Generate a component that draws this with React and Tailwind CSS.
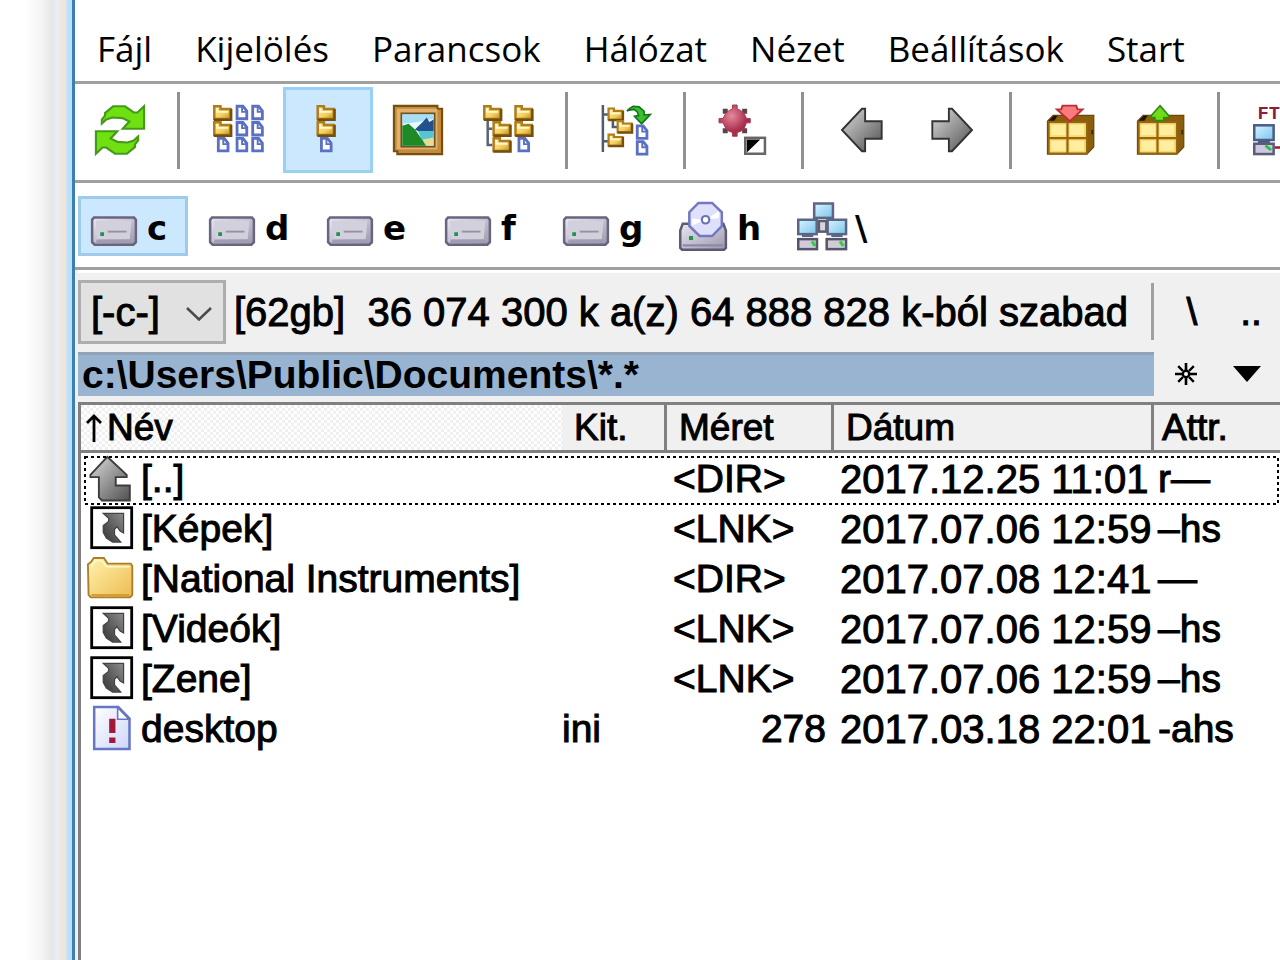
import { useState } from 'react'
import clsx from 'clsx'

const MENU = ['Fájl', 'Kijelölés', 'Parancsok', 'Hálózat', 'Nézet', 'Beállítások', 'Start']

const DRIVES = [
  { letter: 'c', type: 'disk' },
  { letter: 'd', type: 'disk' },
  { letter: 'e', type: 'disk' },
  { letter: 'f', type: 'disk' },
  { letter: 'g', type: 'disk' },
  { letter: 'h', type: 'cd' },
  { letter: '\\', type: 'network' }
]

const FILES = [
  { name: '[..]', icon: 'up', ext: '', size: '<DIR>', date: '2017.12.25 11:01', attr: 'r—' },
  { name: '[Képek]', icon: 'link', ext: '', size: '<LNK>', date: '2017.07.06 12:59', attr: '–hs' },
  { name: '[National Instruments]', icon: 'folder', ext: '', size: '<DIR>', date: '2017.07.08 12:41', attr: '—' },
  { name: '[Videók]', icon: 'link', ext: '', size: '<LNK>', date: '2017.07.06 12:59', attr: '–hs' },
  { name: '[Zene]', icon: 'link', ext: '', size: '<LNK>', date: '2017.07.06 12:59', attr: '–hs' },
  { name: 'desktop', icon: 'ini', ext: 'ini', size: '278', date: '2017.03.18 22:01', attr: '-ahs' }
]

// All icons are drawn on a 16x16 grid
function Icon({ children }) {
  return (
    <svg viewBox="0 0 16 16" className="w-[50px] h-[50px] shrink-0 overflow-visible" aria-hidden="true">
      {children}
    </svg>
  )
}

function Gradients() {
  return (
    <svg className="absolute w-0 h-0" aria-hidden="true">
      <defs>
        <linearGradient id="gold" x1="0" y1="0" x2="1" y2="1">
          <stop offset="0" stopColor="#fff0a0" />
          <stop offset="0.6" stopColor="#f2cf5c" />
          <stop offset="1" stopColor="#c08a1c" />
        </linearGradient>
        <linearGradient id="folder" x1="0" y1="0" x2="1" y2="1">
          <stop offset="0" stopColor="#fff3b0" />
          <stop offset="1" stopColor="#eebb4e" />
        </linearGradient>
        <linearGradient id="steel" x1="0" y1="0" x2="1" y2="1">
          <stop offset="0" stopColor="#ebe8f3" />
          <stop offset="1" stopColor="#9b97ad" />
        </linearGradient>
        <linearGradient id="gray" x1="0" y1="0" x2="1" y2="1">
          <stop offset="0" stopColor="#dcdcdc" />
          <stop offset="1" stopColor="#505050" />
        </linearGradient>
        <linearGradient id="darkgray" x1="0" y1="1" x2="1" y2="0">
          <stop offset="0" stopColor="#333" />
          <stop offset="1" stopColor="#8c8c8c" />
        </linearGradient>
        <linearGradient id="screen" x1="0" y1="0" x2="1" y2="1">
          <stop offset="0" stopColor="#d8f4ff" />
          <stop offset="1" stopColor="#7cc4ee" />
        </linearGradient>
        <linearGradient id="paper" x1="0" y1="0" x2="1" y2="1">
          <stop offset="0" stopColor="#ffffff" />
          <stop offset="1" stopColor="#cdd6f6" />
        </linearGradient>
        <radialGradient id="ruby" cx="0.4" cy="0.35">
          <stop offset="0" stopColor="#e58a9c" />
          <stop offset="1" stopColor="#a82c4c" />
        </radialGradient>
        <pattern id="dither" width="6" height="6" patternUnits="userSpaceOnUse">
          <path d="M0 0h3v3h-3zM3 3h3v3h-3z" fill="#f0f0f0" />
        </pattern>
      </defs>
    </svg>
  )
}

function MiniFolder({ x, y }) {
  return (
    <g transform={`translate(${x} ${y})`}>
      <path d="M0.4 0.4H2.4V1.3H5.6V4.5H0.4Z" fill="url(#gold)" stroke="#b07c1c" strokeWidth="0.8" />
      <path d="M0.3 4.7H5.8V1.3" fill="none" stroke="#74500f" strokeWidth="0.8" />
      <path d="M1.3 1V2.2H4.8" fill="none" stroke="#fff8d0" strokeWidth="0.6" />
    </g>
  )
}

function MiniDoc({ x, y }) {
  return (
    <g transform={`translate(${x} ${y})`}>
      <path d="M0.4 0.4H2.3L3.5 1.9V4.4H0.4Z" fill="#fff" stroke="#5b70c2" strokeWidth="0.9" />
      <path d="M2 0.5V2.2H3.5" fill="none" stroke="#5b70c2" strokeWidth="0.6" />
    </g>
  )
}

function RefreshIcon() {
  const arrow = 'M2.2 5.9V4.7L3.2 3.4V2.6L5.8 0.4H9.6L12.4 2.4H13.6L15.7 0.4V7.6H8.9L11 5.3L8.8 4.2L5.6 4L3.6 4.6Z'
  return (
    <Icon>
      <path d={arrow} fill="#6fe010" stroke="#459a1c" strokeWidth="0.7" />
      <path d={arrow} transform="rotate(180 8 8)" fill="#6fe010" stroke="#459a1c" strokeWidth="0.7" />
    </Icon>
  )
}

function FullViewIcon() {
  return (
    <Icon>
      <MiniFolder x={0} y={0} />
      <MiniFolder x={0} y={5.1} />
      <MiniDoc x={1.3} y={10.3} />
      {[0, 5.2, 10.3].map(y => (
        <g key={y}>
          <MiniDoc x={7.3} y={y} />
          <MiniDoc x={12.3} y={y} />
        </g>
      ))}
    </Icon>
  )
}

function BriefViewIcon() {
  return (
    <Icon>
      <MiniFolder x={4.3} y={0} />
      <MiniFolder x={4.3} y={5.1} />
      <MiniDoc x={5.5} y={10.3} />
    </Icon>
  )
}

function ThumbnailIcon() {
  return (
    <Icon>
      <path d="M0.3 0.3H14.2V1.2H15.7V15.7H1.4V14.8H0.3Z" fill="#c48b3e" stroke="#76500f" strokeWidth="0.7" />
      <rect x="1.2" y="1.2" width="13" height="13" fill="#dfb16a" />
      <rect x="2.7" y="2.7" width="10.6" height="10.6" fill="#e9fbff" stroke="#6b5326" strokeWidth="0.6" />
      <path d="M3 3H13V4.4L8 5.4L3 6Z" fill="#a8def4" />
      <path d="M7 7.8L9.5 5.4L10.8 4L11.6 5.4L13 4.6V8.3H8Z" fill="#24508c" />
      <path d="M8 8.3H13V13H10Z" fill="#57c4d4" />
      <path d="M9.5 11L13 10.4V13H10Z" fill="#e6dc96" />
      <path d="M3 6.6L5 6L7.2 8L10.6 13H3Z" fill="#1d8a26" />
    </Icon>
  )
}

function TreeIcon() {
  return (
    <Icon>
      <path d="M1.5 5V12.8H3M1.5 7.6H3" fill="none" stroke="#5b6474" strokeWidth="0.8" />
      <MiniFolder x={0} y={0} />
      <MiniFolder x={3} y={5.1} />
      <MiniFolder x={3} y={10.2} />
      <MiniFolder x={10} y={0} />
      <MiniFolder x={10} y={5.1} />
      <MiniDoc x={11.1} y={10.3} />
    </Icon>
  )
}

function BranchIcon() {
  return (
    <Icon>
      <path d="M0.6 0V15M0.6 3H2.4M0.6 11.6H2.4M3.8 4.5V7H6" fill="none" stroke="#4f5c70" strokeWidth="0.8" />
      <g transform="scale(0.86)">
        <MiniFolder x={2.4} y={0.9} />
        <MiniFolder x={5.8} y={5.6} />
        <MiniFolder x={2.4} y={10.6} />
      </g>
      <path d="M8.3 1.9L9.2 1.1L10.3 0.4L12.2 0.6L13.8 2V3.2L15.8 3L13 6L10.7 3.6L12 3.4L11.6 2.2L10.6 1.4L9 1.7Z" fill="#35c22a" stroke="#14701a" strokeWidth="0.5" />
      <MiniDoc x={11.2} y={6.3} />
      <MiniDoc x={11.2} y={11.3} />
    </Icon>
  )
}

function SelectionIcon() {
  return (
    <Icon>
      <path d="M1.2 1.2h1.6v1.6h-1.6zM7.4 1.2h1.6v1.6h-1.6zM1.2 7.4h1.6v1.6h-1.6zM7.4 7.4h1.6v1.6h-1.6z" fill="#5c4148" />
      <path d="M4.3 0H5.8V1.2L7 1.8L8 2.6L8.8 4.3H10V5.7H8.8L8 7.6L7 8.4L5.8 8.8V10H4.3V8.8L3.2 8.4L2.2 7.6L1.3 5.7H0V4.3H1.3L2.2 2.6L3.2 1.8L4.3 1.2Z" fill="url(#ruby)" stroke="#a43550" strokeWidth="0.3" />
      <rect x="8.4" y="10.5" width="6.3" height="5.1" fill="#fff" stroke="#666" strokeWidth="0.8" />
      <path d="M8.9 11H13.2L8.9 15.2Z" fill="#000" />
    </Icon>
  )
}

function ArrowIcon({ flip }) {
  return (
    <Icon>
      <path
        d={flip ? 'M14.4 8L8 14.8H7V10.8H1.7V5.2H7V1.2H8Z' : 'M1.6 8L8 1.2H9V5.2H14.3V10.8H9V14.8H8Z'}
        fill="url(#gray)"
        stroke="#333"
        strokeWidth="0.6"
      />
    </Icon>
  )
}

function PackIcon({ unpack }) {
  return (
    <Icon>
      <path d="M0.8 5.2L2.6 3.3H15.6V13.4L13.4 15.7H0.8Z" fill="#8a5e0c" stroke="#6d4806" strokeWidth="0.4" />
      <path d="M1.2 5L2.8 3.4H4L3 5Z" fill="#1c1204" />
      <rect x="1.2" y="5.5" width="12.2" height="10" fill="#f7d970" stroke="#94660f" strokeWidth="0.6" />
      <path d="M2 6.3h4.5v3.4h-4.5zM7.9 6.3h4.6v3.4h-4.6zM2 11.4h4.5v3.2h-4.5zM7.9 11.4h4.6v3.2h-4.6z" fill="#ffeea0" />
      <path d="M7.2 5.4V15.6M1.2 10.6H13.4" fill="none" stroke="#94660f" strokeWidth="0.7" />
      <path d="M15.1 8V9.4" stroke="#3d2904" strokeWidth="0.6" />
      {unpack ? (
        <path d="M8 0.2L10.8 3.4V4H9.2V5H6.4V4H5.2V3.4Z" fill="#6edc1a" stroke="#2f8a12" strokeWidth="0.5" />
      ) : (
        <path d="M5.6 0.2H10L10.4 1.4H12L8 5.2L3.8 1.4H5.2Z" fill="#f87c7c" stroke="#c22a38" strokeWidth="0.6" />
      )}
    </Icon>
  )
}

function FtpIcon() {
  return (
    <Icon>
      <text x="1.4" y="4.6" fontSize="6" fontWeight="700" fontFamily="Liberation Mono, monospace" fill="#8c1d3f">FT</text>
      <rect x="0.4" y="6.5" width="6.2" height="4.7" fill="url(#screen)" stroke="#4b5c86" strokeWidth="0.8" />
      <rect x="1.6" y="11.2" width="3.8" height="1" fill="#4b5c86" />
      <rect x="0.4" y="12.4" width="6.2" height="3.3" fill="#cfc6e2" stroke="#5a5c78" strokeWidth="0.8" />
      <path d="M4 13L5.8 14.4" stroke="#27c23a" strokeWidth="0.9" />
      <path d="M7 13.6H16" stroke="#8c1d3f" strokeWidth="0.8" />
    </Icon>
  )
}

function DiskIcon() {
  return (
    <Icon>
      <path d="M1.6 5.3H14.4L15 6V13.2L14.2 14H1.8L1 13.2V6Z" fill="url(#steel)" stroke="#69657e" strokeWidth="0.8" />
      <path d="M2.2 6.2H13.6L13 12.2H2.6Z" fill="#d3d0de" />
      <path d="M2.6 12.3H13L13.8 13.4H2Z" fill="#a19db2" />
      <path d="M6 9.8H12" stroke="#96929f" strokeWidth="0.6" />
      <rect x="3.6" y="10" width="1.2" height="1.2" fill="#23924c" />
    </Icon>
  )
}

function CdIcon() {
  return (
    <Icon>
      <path d="M1.2 7.3H14.2L15 9.4V15L14.4 15.6H1L0.4 15V9.4Z" fill="url(#steel)" stroke="#5d5a73" strokeWidth="0.8" />
      <path d="M1.2 14.2H14.2" stroke="#8e8aa0" strokeWidth="0.7" />
      <rect x="3.2" y="11.2" width="1.3" height="1.3" fill="#23924c" />
      <path d="M6.2 0.6H10.6L13.7 3.6V8L10.6 11.2H6.6L3.3 8V3.6Z" fill="#dfe0fb" stroke="#7377c4" strokeWidth="0.8" />
      <path d="M8.5 6L12.8 3.2V5.4ZM8.5 6L4.2 7.8V5.6Z" fill="#ffffff" />
      <circle cx="8.5" cy="6" r="1.2" fill="#fff" stroke="#6c70bb" strokeWidth="0.7" />
    </Icon>
  )
}

function NetworkIcon() {
  return (
    <Icon>
      <rect x="7" y="6.4" width="2.4" height="3.4" fill="#d7d4de" stroke="#5c5a6c" strokeWidth="0.8" />
      <rect x="5.5" y="0.8" width="6" height="4.6" fill="url(#screen)" stroke="#5b6782" strokeWidth="0.8" />
      <rect x="0.4" y="6" width="5.9" height="4.6" fill="url(#screen)" stroke="#5b6782" strokeWidth="0.8" />
      <rect x="9.8" y="6" width="5.9" height="4.6" fill="url(#screen)" stroke="#5b6782" strokeWidth="0.8" />
      <path d="M1.6 11.1H5.2M11 11.1H14.6" stroke="#5b6782" strokeWidth="0.8" />
      <rect x="0.4" y="12.2" width="6" height="3.2" fill="#cfcbd9" stroke="#56546a" strokeWidth="0.8" />
      <rect x="9.5" y="12.2" width="6.2" height="3.2" fill="#cfcbd9" stroke="#56546a" strokeWidth="0.8" />
      <path d="M4.8 12.9L5.8 14.4M13.8 12.9L14.8 14.4" stroke="#2bd23b" strokeWidth="1" />
    </Icon>
  )
}

function FileIcon({ type }) {
  if (type === 'up') {
    return (
      <Icon>
        <path d="M6.5 1.2L12.7 7V7.7H9.2V10.4H13.7V15.2H4.8L3.8 14.2V7.7H1.1V7Z" fill="url(#gray)" stroke="#3c3c3c" strokeWidth="0.6" />
      </Icon>
    )
  }
  if (type === 'link') {
    return (
      <Icon>
        <rect x="1.5" y="1.5" width="12.8" height="12.8" fill="#fff" stroke="#000" strokeWidth="0.9" />
        <path d="M5.2 3.3H11.7V9.6L10.6 9L9.6 7.6L8.8 8.4V10.2L10.8 12.5H8.2L6.2 11.2L5.2 9.4V7.2L6.8 6L7 5Z" fill="url(#darkgray)" stroke="#444" strokeWidth="0.4" />
      </Icon>
    )
  }
  if (type === 'folder') {
    return (
      <Icon>
        <path d="M0.3 3.6L1.2 3L2.2 1.6H5.4L6.6 3.4H14L14.5 4.2V13.4L13.8 14.2H1.2L0.5 13.4Z" fill="url(#folder)" stroke="#a6802c" strokeWidth="0.6" />
        <path d="M1.4 4.4L2.6 2.5H4.8L6.2 4.4H13.6" fill="none" stroke="#fff7c8" strokeWidth="0.5" />
        <path d="M1.4 13.5H13.5" stroke="#d79c34" strokeWidth="0.7" />
      </Icon>
    )
  }
  return (
    <Icon>
      <path d="M2.3 1.3H10L13.6 5V14.7H2.3Z" fill="url(#paper)" stroke="#6676c2" strokeWidth="0.8" />
      <path d="M9.8 1.4V5.2H13.4Z" fill="#fff" stroke="#6676c2" strokeWidth="0.5" />
      <path d="M7.1 5h2v4.6h-2zM7.1 11h2v1.8h-2z" fill="#a3173a" />
    </Icon>
  )
}

const TOOLBAR = [
  { id: 'refresh', label: 'Frissítés', icon: <RefreshIcon /> },
  null,
  { id: 'full', label: 'Teljes', icon: <FullViewIcon /> },
  { id: 'brief', label: 'Rövid', icon: <BriefViewIcon /> },
  { id: 'thumbs', label: 'Miniatűrök', icon: <ThumbnailIcon /> },
  { id: 'tree', label: 'Fa', icon: <TreeIcon /> },
  null,
  { id: 'branch', label: 'Ágnézet', icon: <BranchIcon /> },
  null,
  { id: 'invert', label: 'Kijelölés megfordítása', icon: <SelectionIcon /> },
  null,
  { id: 'back', label: 'Vissza', icon: <ArrowIcon /> },
  { id: 'forward', label: 'Előre', icon: <ArrowIcon flip /> },
  null,
  { id: 'pack', label: 'Tömörítés', icon: <PackIcon /> },
  { id: 'unpack', label: 'Kibontás', icon: <PackIcon unpack /> },
  null,
  { id: 'ftp', label: 'Kapcsolódás', icon: <FtpIcon /> }
]

function DriveIcon({ type }) {
  if (type === 'cd') return <CdIcon />
  if (type === 'network') return <NetworkIcon />
  return <DiskIcon />
}

export default function App() {
  const [view, setView] = useState('brief')
  const [drive, setDrive] = useState('c')
  const [focused, setFocused] = useState(0)

  return (
    <div className="flex min-h-screen overflow-hidden bg-white text-black">
      <Gradients />

      {/* Window shadow and frame */}
      <div className="w-[75px] shrink-0 border-r-3 border-[#3f7fae] bg-[linear-gradient(to_right,#fff_0,#fff_24px,#f6f6f6_40px,#e6e6e6_52px,#e6eef6_57px,#f0e4de_62px,#f0e4de_65px,#b8e2fc_68px,#b8e2fc_72px)]" />

      <div className="flex-1 min-w-0 flex flex-col">
        {/* Menu */}
        <nav className="flex items-center gap-[43px] h-[84px] pl-[22px] pt-4 border-b-3 border-[#a0a0a0] font-['Open_Sans',sans-serif] text-[35px] leading-[48px] whitespace-nowrap">
          {MENU.map(item => (
            <button key={item}>{item}</button>
          ))}
        </nav>

        {/* Toolbar */}
        <div className="flex items-center h-[99px] pb-1 border-b-3 border-[#a0a0a0] overflow-hidden">
          {TOOLBAR.map((item, i) =>
            item ? (
              <button
                key={item.id}
                aria-label={item.label}
                onClick={() => setView(item.id)}
                className={clsx(
                  'flex items-center justify-center shrink-0 w-[90px] h-[86px] border-3',
                  view === item.id ? 'bg-[#cce8ff] border-[#99d1f5]' : 'border-transparent'
                )}
              >
                {item.icon}
              </button>
            ) : (
              <div key={i} className="shrink-0 w-[3px] h-[77px] mr-[13px] ml-3 bg-[#919191]" />
            )
          )}
        </div>

        {/* Drives */}
        <div className="flex items-center gap-2 h-[87px] pl-[3px] pt-[2px] border-b-3 border-[#a0a0a0]">
          {DRIVES.map(d => (
            <button
              key={d.letter}
              onClick={() => setDrive(d.letter)}
              className={clsx(
                "flex items-center gap-2 w-[110px] h-[60px] pl-2 border-3 font-['DejaVu_Sans',sans-serif] font-bold text-[34px] leading-[40px]",
                drive === d.letter ? 'bg-[#cce8ff] border-[#9fcbea]' : 'border-transparent'
              )}
            >
              <DriveIcon type={d.type} />
              <span className="pt-1">{d.letter}</span>
            </button>
          ))}
        </div>

        {/* Panel */}
        <div className="flex-1 flex flex-col pl-[3px] bg-[#f0f0f0] font-['Liberation_Sans',sans-serif] [-webkit-text-stroke:1px_#000]">
          <div className="flex items-center h-[82px] pb-[2px] border-t-3 border-white">
            <div className="relative shrink-0">
              <select
                aria-label="Meghajtó"
                className="appearance-none block w-[148px] h-[64px] pl-[10px] border-3 border-[#adadad] bg-[#e1e1e1] text-[40px] leading-[48px]"
              >
                <option>[-c-]</option>
              </select>
              <svg viewBox="0 0 26 14" className="absolute right-[14px] top-[27px] w-[26px] h-[14px] pointer-events-none" aria-hidden="true">
                <path d="M1 1L13 12.5L25 1" fill="none" stroke="#4a4a4a" strokeWidth="2.5" />
              </svg>
            </div>
            <p className="flex-1 pl-2 text-[40px] leading-[48px] whitespace-pre">
              [62gb]{'  '}36 074 300 k a(z) 64 888 828 k-ból szabad
            </p>
            <div className="w-[3px] h-[57px] bg-[#a0a0a0]" />
            <button className="w-[76px] text-[39px] leading-[48px]">\</button>
            <button className="w-[50px] text-[39px] leading-[48px] pr-2">..</button>
          </div>

          <div className="flex items-center h-[44px]">
            <div className="flex-1 h-full pl-1 border-t-3 border-[#93a3b5] bg-[#99b4d1] font-bold text-[39px] leading-[40px] [-webkit-text-stroke:0]">
              c:\Users\Public\Documents\*.*
            </div>
            <button aria-label="Kedvencek" className="flex justify-center w-[64px]">
              <svg viewBox="0 0 22 22" className="w-[22px] h-[22px]" aria-hidden="true">
                <path d="M11 0V7M11 15V22M0 11H7M15 11H22" stroke="#000" strokeWidth="2.6" />
                <path d="M3.2 3.2L8 8M14 14L18.8 18.8M18.8 3.2L14 8M8 14L3.2 18.8" stroke="#000" strokeWidth="2.4" />
                <circle cx="11" cy="11" r="3.2" fill="#fff" stroke="#000" strokeWidth="2.4" />
              </svg>
            </button>
            <button aria-label="Előzmények" className="flex justify-center w-[62px] pr-1">
              <svg viewBox="0 0 28 16" className="w-7 h-4" aria-hidden="true">
                <path d="M0 0H28L14 16Z" fill="#000" />
              </svg>
            </button>
          </div>

          {/* File list */}
          <div className="flex-1 mt-[6px] border-l-3 border-t-3 border-[#808080] bg-white">
            <table className="w-full table-fixed border-separate border-spacing-0 text-left whitespace-nowrap">
              <thead className="text-[37px] leading-[44px]">
                <tr className="h-[48px] bg-[#f0f0f0]">
                  <th className="relative p-0 pl-1 font-normal bg-white border-b-3 border-[#808080]">
                    <svg className="absolute inset-0 w-full h-full" aria-hidden="true">
                      <rect width="100%" height="100%" fill="url(#dither)" />
                    </svg>
                    <div className="relative flex items-center gap-1">
                      <svg viewBox="0 0 18 28" className="w-[18px] h-7" aria-hidden="true">
                        <path d="M9 28V2M2 9L9 2L16 9" fill="none" stroke="#000" strokeWidth="2.8" />
                      </svg>
                      Név
                    </div>
                  </th>
                  <th className="w-[105px] p-0 pl-3 font-normal border-b-3 border-r-3 border-[#808080]">Kit.</th>
                  <th className="w-[167px] p-0 pl-3 font-normal border-b-3 border-r-3 border-[#808080]">Méret</th>
                  <th className="w-[320px] p-0 pl-3 font-normal border-b-3 border-r-3 border-[#808080]">Dátum</th>
                  <th className="w-[126px] p-0 pl-2 font-normal border-b-3 border-[#808080]">Attr.</th>
                </tr>
              </thead>
              <tbody className="text-[39px] leading-[46px]">
                {FILES.map((file, i) => (
                  <tr key={file.name} onClick={() => setFocused(i)} className="relative h-[50px]">
                    <td className="p-0 pl-[6px]">
                      {focused === i && (
                        <svg className="absolute top-1 left-1 w-[calc(100%-6px)] h-[47px] pointer-events-none overflow-visible" aria-hidden="true">
                          <rect width="100%" height="100%" fill="none" stroke="#000" strokeWidth="2" strokeDasharray="3 3" />
                        </svg>
                      )}
                      <div className="flex items-center gap-1">
                        <FileIcon type={file.icon} />
                        <span className="pt-[2px]">{file.name}</span>
                      </div>
                    </td>
                    <td className="p-0 pt-[2px]">{file.ext}</td>
                    <td className={clsx('p-0 pt-[2px]', file.icon === 'ini' ? 'text-right pr-2' : 'pl-[6px]')}>{file.size}</td>
                    <td className="p-0 pt-[2px] pl-[6px] text-[40px]">{file.date}</td>
                    <td className="p-0 pt-[2px] pl-1">{file.attr}</td>
                  </tr>
                ))}
              </tbody>
            </table>
          </div>
        </div>
      </div>
    </div>
  )
}
